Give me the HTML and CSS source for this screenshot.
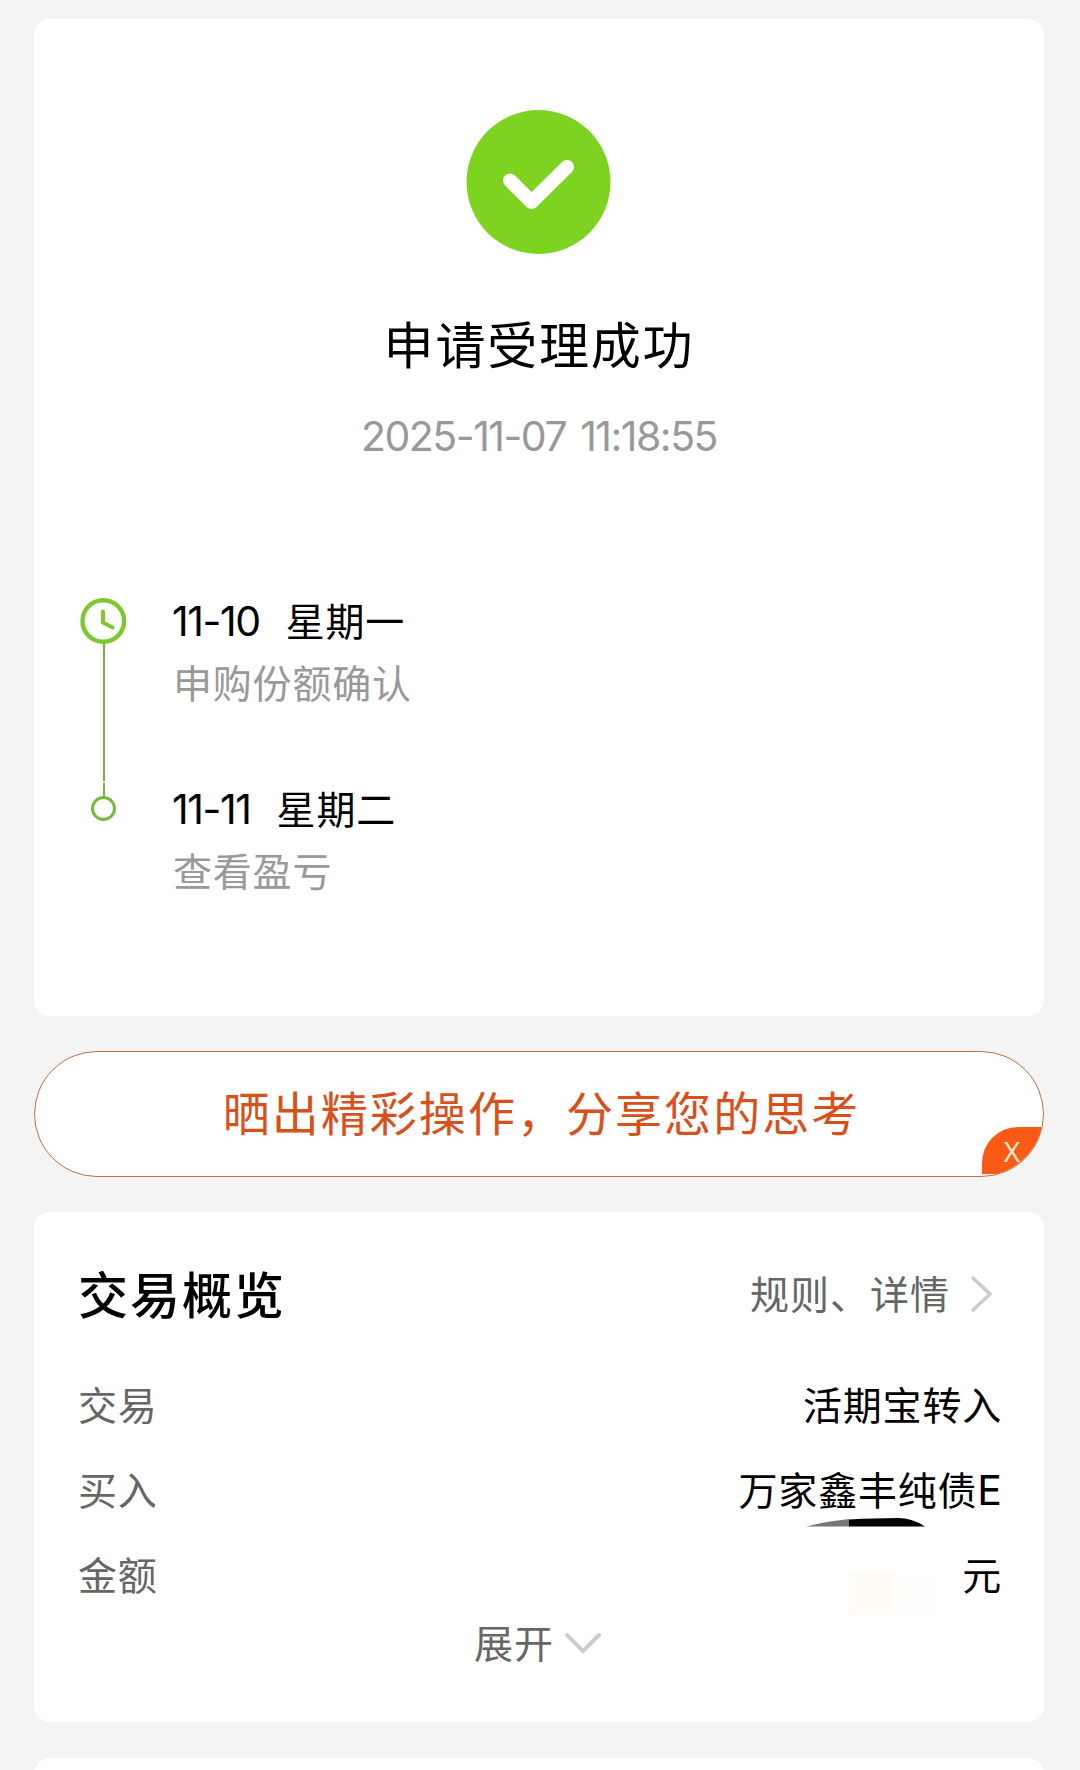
FILE: index.html
```html
<!DOCTYPE html>
<html lang="zh-CN">
<head>
<meta charset="utf-8">
<title>申请受理成功</title>
<link rel="stylesheet" href="styles.css">
</head>
<body>
<main class="page">
  <section class="card result">
    <svg class="result-icon" viewBox="0 0 144 144"><circle cx="71.500" cy="72" r="72" fill="#7ed321"/><path d="M43 70.500 64.500 92 100 57" fill="none" stroke="#fff" stroke-width="14" stroke-linecap="round" stroke-linejoin="round"/></svg>
    <h1 class="result-title">申请受理成功</h1>
    <p class="result-time">2025-11-07 11:18:55</p>
    <div class="timeline">
      <svg class="timeline-track" viewBox="0 0 56 240">
        <g fill="none">
          <path d="M28 54V192M28 193.500V208" stroke="#78b43c" stroke-width="2"/>
          <circle cx="27.300" cy="32" r="20.800" stroke="#7bc92c" stroke-width="4.400"/>
          <path d="M27 22.500V33.500L36.500 38.500" stroke="#7bc92c" stroke-width="4" stroke-linecap="round" stroke-linejoin="round"/>
          <circle cx="27.500" cy="219.500" r="11" stroke="#78b93a" stroke-width="3"/>
        </g>
      </svg>
      <ol class="steps">
        <li class="step">
          <p class="step-date"><span class="num">11-10</span><span>星期一</span></p>
          <p class="step-note">申购份额确认</p>
        </li>
        <li class="step">
          <p class="step-date"><span class="num">11-11</span><span>星期二</span></p>
          <p class="step-note">查看盈亏</p>
        </li>
      </ol>
    </div>
  </section>

  <section class="share">
    <span class="share-text">晒出精彩操作，分享您的思考</span>
    <span class="share-close">X</span>
  </section>

  <section class="card overview">
    <header class="overview-head">
      <h2 class="overview-title">交易概览</h2>
      <a class="overview-link">规则、详情<svg class="chevron-right" viewBox="0 0 24 38"><path d="M2 2 20 19 2 36" fill="none" stroke="#ccc" stroke-width="3.600"/></svg></a>
    </header>
    <dl class="rows">
      <div class="row"><dt>交易</dt><dd>活期宝转入</dd></div>
      <div class="row"><dt>买入</dt><dd>万家鑫丰纯债<span class="num">E</span></dd></div>
      <div class="row"><dt>金额</dt><dd>元</dd></div>
    </dl>
    <a class="expand">展开<svg class="chevron-down" viewBox="0 0 36 22"><path d="M2 2 18 18 34 2" fill="none" stroke="#ccc" stroke-width="4" stroke-linecap="round" stroke-linejoin="round"/></svg></a>
    <svg class="smudge" viewBox="0 0 133 98">
      <path d="M0 8.500Q22 3 43 1V8.500Z" fill="#777"/>
      <path d="M43 1.500Q70 0 92 0Q106 0 119 8.500H43Z" fill="#000"/>
      <path d="M43 53H88V97H43Z" fill="#fffcf6"/><path d="M88 53H132V97H88Z" fill="#fffefd"/>
    </svg>
  </section>

  <section class="card next"></section>
</main>
</body>
</html>
```
FILE: styles.css
```css
* { box-sizing: border-box; margin: 0; padding: 0; }
body { background: #f4f4f4; color: #000; font-family: "Noto Sans CJK SC", sans-serif; }
.page { display: flex; flex-direction: column; height: 1770px; padding: 19px 36px 0 34px; overflow: hidden; }
.card { flex: none; background: #fff; border-radius: 16px; }
svg { display: block; flex: none; overflow: visible; }
.num { font-family: Inter, sans-serif; line-height: 1; }

.result { display: flex; flex-direction: column; align-items: center; height: 997px; padding-top: 91px; }
.result-icon { width: 144px; height: 144px; }
.result-title { margin-top: 58px; font-size: 50px; font-weight: 400; line-height: 60px; letter-spacing: 1.800px; }
.result-time { margin-top: 39px; color: #999; font-family: Inter, sans-serif; font-size: 41px; line-height: 50px; letter-spacing: -1.500px; word-spacing: 4px; }
.timeline { display: flex; align-self: stretch; gap: 40px; margin-top: 128px; padding-left: 42px; }
.timeline-track { width: 56px; height: 240px; }
.steps { display: flex; flex-direction: column; gap: 65px; list-style: none; font-size: 39px; letter-spacing: 0.800px; }
.step-date { display: flex; align-items: center; gap: 26px; height: 60px; line-height: 58px; }
.step-date .num { padding-top: 4px; font-size: 41px; letter-spacing: -1.400px; }
.step-note { height: 63px; padding-left: 1px; color: #999; line-height: 64px; }

.share { position: relative; flex: none; display: flex; justify-content: center; height: 126px; margin-top: 35px; padding-left: 5px; border: 1.500px solid #c96c40; border-radius: 63px; background: #fff; overflow: hidden; }
.share-text { color: #d9501b; font-size: 47px; line-height: 117px; letter-spacing: 2.050px; }
.share-close { position: absolute; right: 0; bottom: 2px; width: 61px; height: 47px; padding-right: 1px; border-radius: 36px 0 0 0; background: #fa5a14; color: #ffe9cf; font-family: "Noto Sans", sans-serif; font-size: 28px; line-height: 49px; text-align: center; }

.overview { position: relative; height: 510px; margin-top: 35px; padding: 50px 42px 0 44px; }
.overview-head { display: flex; align-items: center; justify-content: space-between; height: 60px; padding-right: 8px; }
.overview-title { font-size: 50px; font-weight: 500; line-height: 60px; letter-spacing: 2px; }
.overview-link { display: flex; align-items: center; gap: 20px; color: #666; font-size: 39px; line-height: 60px; letter-spacing: 1px; }
.chevron-right { width: 24px; height: 38px; margin-top: 4px; }
.rows { margin-top: 39px; font-size: 39px; letter-spacing: 0.800px; }
.row { display: flex; justify-content: space-between; height: 85px; line-height: 85px; }
.row dt { color: #666; }
.row .num { font-size: 41px; letter-spacing: 0; }
.expand { display: flex; align-items: center; justify-content: center; gap: 11px; height: 50px; padding-right: 5px; color: #666; font-size: 39px; letter-spacing: 1px; line-height: 48px; }
.chevron-down { width: 36px; height: 22px; margin-top: 5px; }
.smudge { position: absolute; left: 772px; top: 306px; width: 133px; height: 98px; }

.next { height: 60px; margin-top: 36px; }
```
